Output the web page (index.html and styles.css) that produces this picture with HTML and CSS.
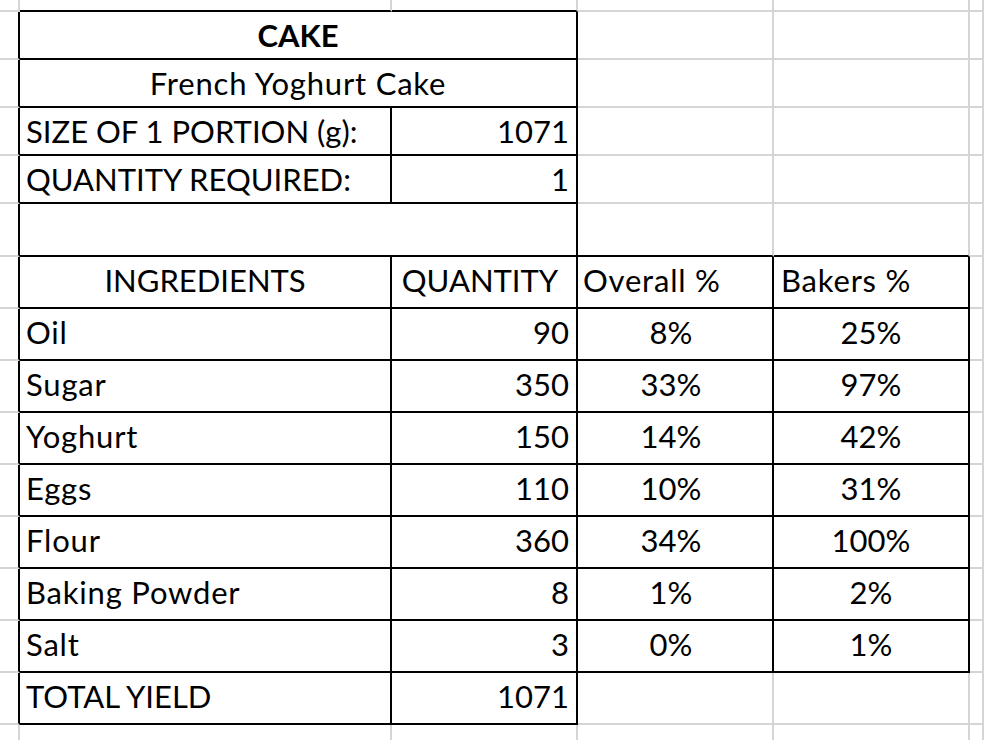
FILE: index.html
```html
<!DOCTYPE html>
<html lang="en">
<head>
<meta charset="utf-8">
<title>French Yoghurt Cake</title>
<link rel="stylesheet" href="styles.css">
</head>
<body>
<div class="sheet">
  <!-- row 0 -->
  <div class="c"></div><div class="c b"></div><div class="c b"></div><div class="c"></div><div class="c"></div><div class="c"></div>
  <!-- row 1 -->
  <div class="c r"></div><div class="c r b span2 ctr title">CAKE</div><div class="c"></div><div class="c"></div><div class="c"></div>
  <!-- row 2 -->
  <div class="c r"></div><div class="c r b span2 ctr lc">French Yoghurt Cake</div><div class="c"></div><div class="c"></div><div class="c"></div>
  <!-- row 3 -->
  <div class="c r"></div><div class="c r b">SIZE OF 1 PORTION (g):</div><div class="c r b num">1071</div><div class="c"></div><div class="c"></div><div class="c"></div>
  <!-- row 4 -->
  <div class="c r"></div><div class="c r b">QUANTITY REQUIRED:</div><div class="c r b num">1</div><div class="c"></div><div class="c"></div><div class="c"></div>
  <!-- row 5 -->
  <div class="c r"></div><div class="c r b span2"></div><div class="c b"></div><div class="c b"></div><div class="c"></div>
  <!-- row 6 header -->
  <div class="c r"></div><div class="c r b ctr lo">INGREDIENTS</div><div class="c r b ctr qh lo">QUANTITY</div><div class="c r b oh lc lo">Overall %</div><div class="c r b bh lc lo">Bakers %</div><div class="c"></div>
  <!-- ingredients -->
  <div class="c r"></div><div class="c r b lc lo">Oil</div><div class="c r b num lo">90</div><div class="c r b ctr po lo">8%</div><div class="c r b ctr lo">25%</div><div class="c"></div>
  <div class="c r"></div><div class="c r b lc lo">Sugar</div><div class="c r b num lo">350</div><div class="c r b ctr po lo">33%</div><div class="c r b ctr lo">97%</div><div class="c"></div>
  <div class="c r"></div><div class="c r b lc lo">Yoghurt</div><div class="c r b num lo">150</div><div class="c r b ctr po lo">14%</div><div class="c r b ctr lo">42%</div><div class="c"></div>
  <div class="c r"></div><div class="c r b lc lo">Eggs</div><div class="c r b num lo">110</div><div class="c r b ctr po lo">10%</div><div class="c r b ctr lo">31%</div><div class="c"></div>
  <div class="c r"></div><div class="c r b lc lo">Flour</div><div class="c r b num lo">360</div><div class="c r b ctr po lo">34%</div><div class="c r b ctr lo">100%</div><div class="c"></div>
  <div class="c r"></div><div class="c r b lc lo">Baking Powder</div><div class="c r b num lo">8</div><div class="c r b ctr po lo">1%</div><div class="c r b ctr lo">2%</div><div class="c"></div>
  <div class="c r"></div><div class="c r b lc lo">Salt</div><div class="c r b num lo">3</div><div class="c r b ctr po lo">0%</div><div class="c r b ctr lo">1%</div><div class="c"></div>
  <!-- total -->
  <div class="c r"></div><div class="c r b lo">TOTAL YIELD</div><div class="c r b num lo">1071</div><div class="c"></div><div class="c"></div><div class="c"></div>
  <!-- row after -->
  <div class="c"></div><div class="c"></div><div class="c"></div><div class="c"></div><div class="c"></div><div class="c"></div>
</div>
</body>
</html>
```

FILE: styles.css
```css
html, body {
  margin: 0;
  padding: 0;
  background: #ffffff;
  overflow: hidden;
}

.sheet {
  display: grid;
  grid-template-columns: 20px 372px 186px 196px 196px 1fr;
  grid-template-rows: 12px repeat(4, 48px) 53px repeat(9, 52px) 52px;
  width: 984px;
  height: 740px;
  overflow: hidden;
  font-family: Lato, "Open Sans", sans-serif;
  font-size: 31px;
  color: #000000;
}

.c {
  box-sizing: border-box;
  border-right: 2px solid #d5d5d5;
  border-bottom: 2px solid #d5d5d5;
  display: flex;
  align-items: center;
  padding: 0 6px;
  white-space: nowrap;
  overflow: hidden;
  min-width: 0;
}

.r { border-right-color: #000000; }
.b { border-bottom-color: #000000; }

.span2 { grid-column: span 2; }

.ctr { justify-content: center; }
.num { justify-content: flex-end; padding-right: 7px; }

.lc { letter-spacing: 0.8px; }
.lo { padding-bottom: 4px; }

.title { font-weight: 700; }

.qh { padding-right: 14px; }
.oh { padding-left: 5px; }
.bh { padding-left: 7px; }
.po { padding-right: 14px; }
```
